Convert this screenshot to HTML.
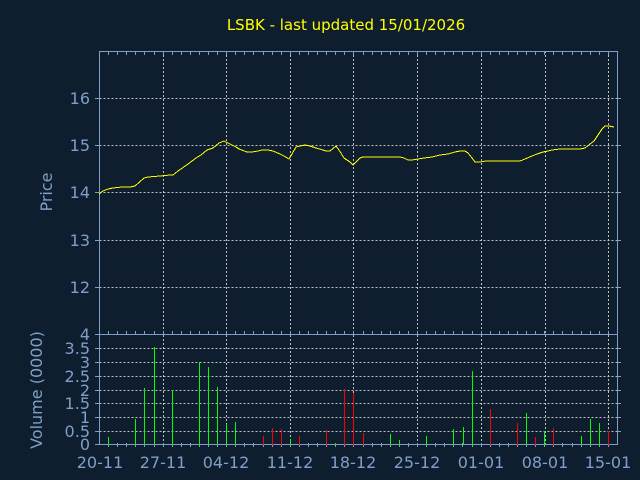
<!DOCTYPE html>
<html><head><style>
html,body{margin:0;padding:0;background:#0f1e2f;}
svg{display:block;}
text{font-family:"DejaVu Sans","Liberation Sans",sans-serif;fill:#7f9fc9;}
</style></head><body>
<svg width="640" height="480" viewBox="0 0 640 480" xmlns="http://www.w3.org/2000/svg">
<rect width="640" height="480" fill="#0f1e2f"/>
<text x="346" y="30" text-anchor="middle" font-size="15" style="fill:#ffff00">LSBK - last updated 15/01/2026</text>
<g stroke="#c0c0c0" stroke-width="1" stroke-dasharray="2,2" fill="none">
<path d="M99.5 98.5H617M99.5 145.5H617M99.5 192.5H617M99.5 240.5H617M99.5 287.5H617"/>
<path d="M99.5 348.5H617M99.5 362.5H617M99.5 376.5H617M99.5 390.5H617M99.5 403.5H617M99.5 417.5H617M99.5 431.5H617"/>
<path d="M163.5 51V445M226.5 51V445M290.5 51V445M353.5 51V445M417.5 51V445M481.5 51V445M545.5 51V445M608.5 51V445"/>
</g>
<g stroke="#7f9fc9" stroke-width="1" fill="none">
<rect x="99.5" y="51.5" width="518" height="393"/>
<path d="M99 334.5H617"/>
<path d="M95 98.5H99M95 145.5H99M95 192.5H99M95 240.5H99M95 287.5H99M95 334.5H99M95 348.5H99M95 362.5H99M95 376.5H99M95 390.5H99M95 403.5H99M95 417.5H99M95 431.5H99M95 444.5H99"/>
<path d="M617 98.5H621M617 145.5H621M617 192.5H621M617 240.5H621M617 287.5H621M617 348.5H621M617 362.5H621M617 376.5H621M617 390.5H621M617 403.5H621M617 417.5H621M617 431.5H621"/>
<path id="tk" d="M108.5 0v4M117.5 0v4M126.5 0v4M135.5 0v4M144.5 0v4M154.5 0v4M163.5 0v4M172.5 0v4M181.5 0v4M190.5 0v4M199.5 0v4M208.5 0v4M217.5 0v4M226.5 0v4M235.5 0v4M244.5 0v4M253.5 0v4M263.5 0v4M272.5 0v4M281.5 0v4M290.5 0v4M299.5 0v4M308.5 0v4M317.5 0v4M326.5 0v4M335.5 0v4M344.5 0v4M353.5 0v4M363.5 0v4M372.5 0v4M381.5 0v4M390.5 0v4M399.5 0v4M408.5 0v4M417.5 0v4M426.5 0v4M435.5 0v4M444.5 0v4M453.5 0v4M462.5 0v4M472.5 0v4M481.5 0v4M490.5 0v4M499.5 0v4M508.5 0v4M517.5 0v4M526.5 0v4M535.5 0v4M544.5 0v4M553.5 0v4M562.5 0v4M572.5 0v4M581.5 0v4M590.5 0v4M599.5 0v4M608.5 0v4" transform="translate(0,51)"/>
<use href="#tk" transform="translate(0,280)"/>
<use href="#tk" transform="translate(0,392)"/>
</g>
<polyline fill="none" stroke="#ffff00" stroke-width="1" shape-rendering="crispEdges" points="99,194 103,191 108,189 113,188 122,187 130,187 135,186 144,178 148,177 160,176 170,175 173,175 178,171 188,164 196,158 201,155 207,150 213,148 219,143 224,141 232,145 236,147 239,149 247,152 252,152 258,151 262,150 268,150 273,151 280,154 284,156 289,159 296,147 300,146 305,145 310,146 316,148 323,150 326,151 330,151 336,146 339,150 344,158 350,162 353,165 360,158 363,157 400,157 404,158 408,160 412,160 418,159 424,158 432,157 440,155 448,154 455,152 460,151 465,151 468,153 472,158 475,162 480,162 486,161 490,161 520,161 525,159 532,156 537,154 543,152 548,151 552,150 560,149 580,149 585,148 590,144 594,141 598,135 602,129 605,126 609,126 614,127"/>
<g stroke="#00ff00" stroke-width="1">
<path d="M108.5 445V437M135.5 445V419M144.5 445V388M154.5 445V347M172.5 445V390M199.5 445V362M208.5 445V367M217.5 445V387M226.5 445V424M235.5 445V422M290.5 445V439M335.5 445V443M390.5 445V434M399.5 445V440M426.5 445V436M453.5 445V429M463.5 445V427M472.5 445V371M526.5 445V413M544.5 445V431M581.5 445V436M590.5 445V419M599.5 445V423"/>
</g>
<g stroke="#ff0000" stroke-width="1">
<path d="M263.5 445V436M272.5 445V428M281.5 445V429M299.5 445V436M326.5 445V430M344.5 445V389M353.5 445V393M363.5 445V433M490.5 445V409M517.5 445V423M535.5 445V437M553.5 445V428M608.5 445V431"/>
</g>
<g font-size="16" text-anchor="end">
<text x="90" y="104">16</text>
<text x="90" y="151">15</text>
<text x="90" y="198">14</text>
<text x="90" y="246">13</text>
<text x="90" y="293">12</text>
<text x="90" y="340">4</text>
<text x="90" y="354">3.5</text>
<text x="90" y="368">3</text>
<text x="90" y="382">2.5</text>
<text x="90" y="396">2</text>
<text x="90" y="409">1.5</text>
<text x="90" y="423">1</text>
<text x="90" y="437">0.5</text>
<text x="90" y="450">0</text>
</g>
<g font-size="16" text-anchor="middle">
<text x="100" y="468">20-11</text>
<text x="163" y="468">27-11</text>
<text x="226" y="468">04-12</text>
<text x="290" y="468">11-12</text>
<text x="353" y="468">18-12</text>
<text x="417" y="468">25-12</text>
<text x="481" y="468">01-01</text>
<text x="545" y="468">08-01</text>
<text x="608" y="468">15-01</text>
</g>
<text transform="translate(52,192) rotate(-90)" font-size="16" text-anchor="middle">Price</text>
<text transform="translate(42,390) rotate(-90)" font-size="16" text-anchor="middle">Volume (0000)</text>
</svg>
</body></html>
